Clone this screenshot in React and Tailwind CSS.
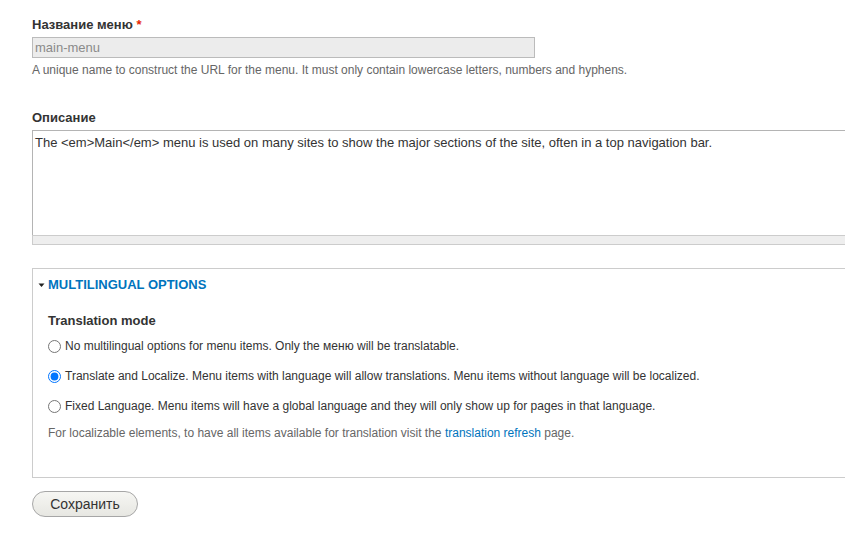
import { useState } from "react";

const OPTIONS = [
  { id: "none", label: "No multilingual options for menu items. Only the меню will be translatable." },
  {
    id: "localize",
    label:
      "Translate and Localize. Menu items with language will allow translations. Menu items without language will be localized.",
  },
  {
    id: "fixed",
    label: "Fixed Language. Menu items will have a global language and they will only show up for pages in that language.",
  },
];

export default function App() {
  const [mode, setMode] = useState("localize");

  return (
    <div
      className="h-[548px] w-[845px] overflow-hidden bg-white text-[13px] text-[#333]"
      style={{ fontFamily: '"Liberation Sans", Arial, sans-serif' }}
    >
      <div className="w-[900px] pl-[32px] pt-[18px]">
        {/* Название меню */}
        <div>
          <label className="block font-bold leading-[14px] text-[#333]">
            Название меню <span className="text-[#e62600]">*</span>
          </label>
          <input
            type="text"
            value="main-menu"
            disabled
            readOnly
            className="mt-[5px] block h-[21px] w-[503px] border border-[#bbb] bg-[#ececec] px-[2px] text-[13px] text-[#8a8a8a] outline-none"
          />
          <p className="mt-[5px] text-[12px] leading-[15px] text-[#666]">
            A unique name to construct the URL for the menu. It must only contain lowercase letters, numbers and hyphens.
          </p>
        </div>

        {/* Описание */}
        <div className="mt-[33px]">
          <label className="block font-bold leading-[14px] text-[#333]">Описание</label>
          <div className="mt-[5px] w-[850px]">
            <textarea
              defaultValue="The <em>Main</em> menu is used on many sites to show the major sections of the site, often in a top navigation bar."
              className="block h-[105px] w-full resize-none border border-b-0 border-[#b4b4b4] bg-white px-[2px] pt-[3px] text-[13px] leading-[18px] text-[#333] outline-none"
            />
            <div className="h-[10px] border border-[#ccc] bg-[#eee]" />
          </div>
        </div>

        {/* MULTILINGUAL OPTIONS */}
        <div className="mt-[23px] h-[210px] w-[850px] border border-[#ccc] pl-[15px] pt-[9px]">
          <div className="flex items-center">
            <svg width="10" height="10" viewBox="0 0 10 10" className="-ml-[10px]">
              <path d="M0.5 3.5 L6.5 3.5 L3.5 7 Z" fill="#222" />
            </svg>
            <span className="font-bold uppercase leading-[14px] text-[#0074bd]">Multilingual options</span>
          </div>

          <div className="mt-[22px] font-bold leading-[14px] text-[#333]">Translation mode</div>

          <div className="mt-[11px] flex flex-col gap-[16px]">
            {OPTIONS.map((o) => (
              <label key={o.id} className="flex h-[14px] items-center gap-[4px] text-[12px] text-[#333]">
                <input
                  type="radio"
                  name="mode"
                  checked={mode === o.id}
                  onChange={() => setMode(o.id)}
                  className="m-0 h-[13px] w-[13px]"
                />
                <span>{o.label}</span>
              </label>
            ))}
          </div>

          <p className="mt-[13px] text-[12px] leading-[15px] text-[#666]">
            For localizable elements, to have all items available for translation visit the{" "}
            <a href="#" className="text-[#0074bd]">
              translation refresh
            </a>{" "}
            page.
          </p>
        </div>

        <button
          type="button"
          className="mt-[13px] h-[26px] w-[106px] rounded-full border border-[#a6a6a6] bg-gradient-to-b from-[#f6f6f3] to-[#e7e7e2] text-[14px] text-[#333]"
        >
          Сохранить
        </button>
      </div>
    </div>
  );
}
